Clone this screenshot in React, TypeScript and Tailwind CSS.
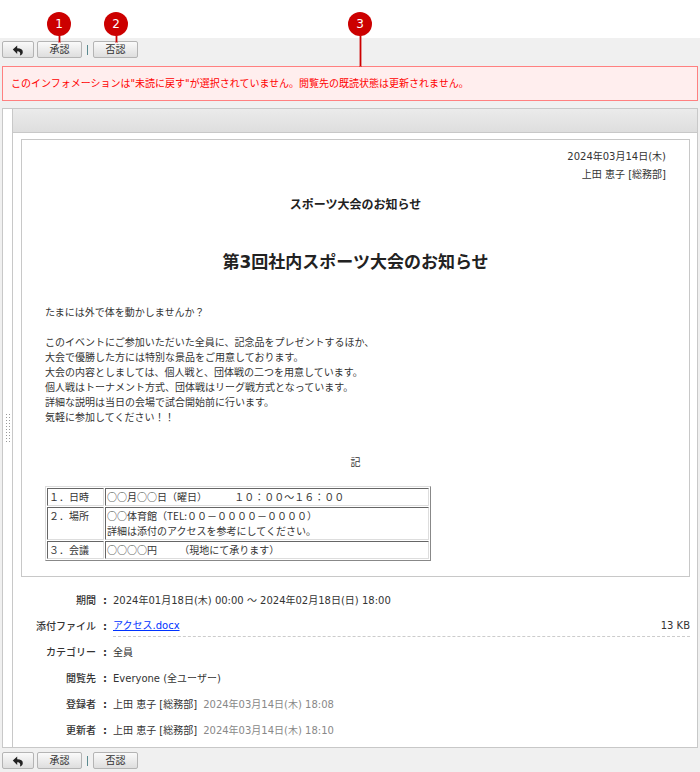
import type { ReactNode } from "react";

/** 番号付きの引き出し線 */
function Callout({ no, className, line }: { no: number; className: string; line: string }) {
  return (
    <span className={`absolute flex flex-col items-center pointer-events-none ${className}`}>
      <span className="flex size-6 items-center justify-center rounded-full bg-[#cc0000] text-[12px] leading-none text-white">
        {no}
      </span>
      <span className={`w-px bg-[#cc0000] outline outline-[#cc0000]/40 ${line}`} />
    </span>
  );
}

function ToolButton({ children, label, className }: { children: ReactNode; label?: string; className: string }) {
  return (
    <button
      type="button"
      aria-label={label}
      className={`relative flex h-[17px] items-center justify-center rounded-xs border border-[#b4b4b4] bg-linear-to-b from-[#fafafa] to-[#dedede] text-[10px] leading-none text-[#333] ${className}`}
    >
      {children}
    </button>
  );
}

function Toolbar({ callouts = false }: { callouts?: boolean }) {
  return (
    <div className="flex items-center px-[2px] py-[3px]">
      <ToolButton label="戻る" className="w-8">
        <svg viewBox="0 0 12 12" className="size-3" fill="#222" aria-hidden="true">
          <path d="M.8 5.6 5.2 1.4V4.2C8.8 4.2 10.8 5.4 10.8 8c0 1.7-1 2.9-2.9 3.6C8.800 9 8 7.300 5.200 7.300V10z" />
        </svg>
      </ToolButton>
      <ToolButton className="ml-[3px] w-[45px]">
        承認
        {callouts && <Callout no={1} className="-top-[30px] left-[9px]" line="h-[6px]" />}
      </ToolButton>
      <span className="mx-[5px] h-[10px] w-px bg-[#5a8a90]" />
      <ToolButton className="w-[45px]">
        否認
        {callouts && <Callout no={2} className="-top-[30px] left-[10px]" line="h-[6px]" />}
      </ToolButton>
    </div>
  );
}

const body = [
  "たまには外で体を動かしませんか？",
  "",
  "このイベントにご参加いただいた全員に、記念品をプレゼントするほか、",
  "大会で優勝した方には特別な景品をご用意しております。",
  "大会の内容としましては、個人戦と、団体戦の二つを用意しています。",
  "個人戦はトーナメント方式、団体戦はリーグ戦方式となっています。",
  "詳細な説明は当日の会場で試合開始前に行います。",
  "気軽に参加してください！！",
];

const schedule = [
  { label: "１．日時", lines: ["○○月○○日（曜日）　　　\u00a0１０：００～１６：００"] },
  { label: "２．場所", lines: ["○○体育館（TEL:００－００００－００００）", "詳細は添付のアクセスを参考にしてください。"] },
  { label: "３．会議", lines: ["○○○○円　　\u00a0（現地にて承ります）"] },
];

const cell = "border border-t-[#666] border-l-[#666] border-r-[#ddd] border-b-[#ddd] px-px pb-px text-left align-top font-normal";

function Field({ label, children }: { label: string; children: ReactNode }) {
  return (
    <div className="flex h-[26px] items-center">
      <dt className="flex w-[87px] shrink-0 justify-end gap-[6px] font-medium">
        {label}
        <span className="w-[6px] text-center font-bold">:</span>
      </dt>
      <dd className="ml-[5px] flex flex-1 items-center">{children}</dd>
    </div>
  );
}

export default function App() {
  return (
    <div className="bg-white pt-[38px] font-['DejaVu_Sans','Noto_Sans_CJK_JP',sans-serif] text-[10px] leading-[15px] text-[#333]">
      <div className="bg-[#f0f0f0]">
        <Toolbar callouts />

        <div role="alert" className="relative mx-[2px] mt-[5px] border border-[#ff8080] bg-[#ffeeee] px-2 py-[9px] text-[#ff0000]">
          このインフォメーションは"未読に戻す"が選択されていません。閲覧先の既読状態は更新されません。
          <Callout no={3} className="-top-[55px] left-[345px]" line="h-[30px]" />
        </div>

        <div className="mx-[2px] mt-[7px] flex border border-[#c8c8c8] bg-white">
          <div className="flex w-[10px] shrink-0 items-center justify-center border-r border-[#c8c8c8]">
            <div className="h-[30px] w-[6px] bg-[radial-gradient(circle,#999_1px,transparent_1px)] bg-size-[3px_3px]" />
          </div>
          <div className="flex-1">
            <div className="h-6 border-b border-[#c8c8c8] bg-linear-to-b from-[#ebebeb] to-[#dedede]" />

            <article className="mr-[7px] ml-2 mt-[6px] border border-[#c8c8c8] px-[23px] pt-2 pb-[15px]">
              <div className="text-right leading-[18px]">
                <p>2024年03月14日(木)</p>
                <p>上田 恵子 [総務部]</p>
              </div>
              <h1 className="mt-3 text-center text-[12px] leading-[18px] font-bold text-[#222]">スポーツ大会のお知らせ</h1>
              <h2 className="mt-9 text-center text-[17px] leading-6 font-bold text-[#222]">第3回社内スポーツ大会のお知らせ</h2>
              <div className="mt-[31px]">
                {body.map((line, i) => (
                  <p key={i} className="min-h-[15px]">{line}</p>
                ))}
              </div>
              <p className="mt-[30px] text-center">記</p>
              <table className="mt-4 w-[386px] border-separate border-spacing-px border border-t-[#ddd] border-l-[#ddd] border-r-[#888] border-b-[#888] font-['Noto_Sans_CJK_JP',sans-serif]">
                <tbody>
                  {schedule.map((row) => (
                    <tr key={row.label}>
                      <th scope="row" className={`w-[57px] ${cell}`}>{row.label}</th>
                      <td className={cell}>
                        {row.lines.map((line) => (
                          <p key={line}>{line}</p>
                        ))}
                      </td>
                    </tr>
                  ))}
                </tbody>
              </table>
            </article>

            <dl className="mr-[7px] ml-2 mt-[10px] mb-1">
              <Field label="期間">2024年01月18日(木) 00:00 ～ 2024年02月18日(日) 18:00</Field>
              <Field label="添付ファイル">
                <span className="flex flex-1 items-center justify-between border-b border-dashed border-[#ccc] py-[3px]">
                  <a href="#" className="text-[#0033ff] underline">アクセス.docx</a>
                  <span>13 KB</span>
                </span>
              </Field>
              <Field label="カテゴリー">全員</Field>
              <Field label="閲覧先">Everyone (全ユーザー)</Field>
              <Field label="登録者">
                上田 恵子 [総務部]<span className="ml-[6px] text-[#888]">2024年03月14日(木) 18:08</span>
              </Field>
              <Field label="更新者">
                上田 恵子 [総務部]<span className="ml-[6px] text-[#888]">2024年03月14日(木) 18:10</span>
              </Field>
            </dl>
          </div>
        </div>

        <div className="pt-px pb-px">
          <Toolbar />
        </div>
      </div>
    </div>
  );
}
